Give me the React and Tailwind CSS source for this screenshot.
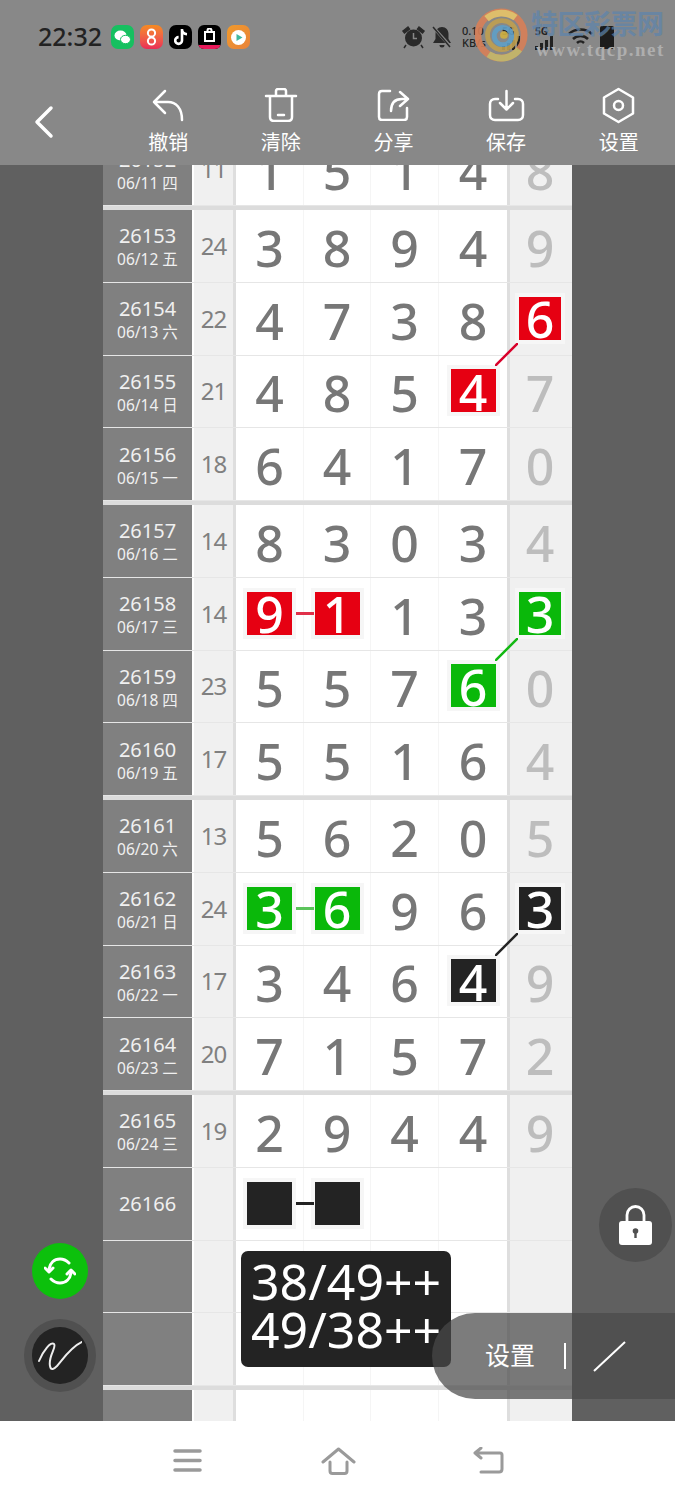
import React from "react";

const groups = [
  [
    { id: "26152", date: "06/11 四", sum: "11", nums: ["1", "5", "1", "4", "8"] },
  ],
  [
    { id: "26153", date: "06/12 五", sum: "24", nums: ["3", "8", "9", "4", "9"] },
    { id: "26154", date: "06/13 六", sum: "22", nums: ["4", "7", "3", "8", "6"], marks: { 4: "r" }, link: "r" },
    { id: "26155", date: "06/14 日", sum: "21", nums: ["4", "8", "5", "4", "7"], marks: { 3: "r" } },
    { id: "26156", date: "06/15 一", sum: "18", nums: ["6", "4", "1", "7", "0"] },
  ],
  [
    { id: "26157", date: "06/16 二", sum: "14", nums: ["8", "3", "0", "3", "4"] },
    { id: "26158", date: "06/17 三", sum: "14", nums: ["9", "1", "1", "3", "3"], marks: { 0: "r", 1: "r", 4: "g" }, dash: "r", link: "g" },
    { id: "26159", date: "06/18 四", sum: "23", nums: ["5", "5", "7", "6", "0"], marks: { 3: "g" } },
    { id: "26160", date: "06/19 五", sum: "17", nums: ["5", "5", "1", "6", "4"] },
  ],
  [
    { id: "26161", date: "06/20 六", sum: "13", nums: ["5", "6", "2", "0", "5"] },
    { id: "26162", date: "06/21 日", sum: "24", nums: ["3", "6", "9", "6", "3"], marks: { 0: "g", 1: "g", 4: "k" }, dash: "g", link: "k" },
    { id: "26163", date: "06/22 一", sum: "17", nums: ["3", "4", "6", "4", "9"], marks: { 3: "k" } },
    { id: "26164", date: "06/23 二", sum: "20", nums: ["7", "1", "5", "7", "2"] },
  ],
  [
    { id: "26165", date: "06/24 三", sum: "19", nums: ["2", "9", "4", "4", "9"] },
    { id: "26166", nums: ["", "", "", "", ""], marks: { 0: "k", 1: "k" }, dash: "k" },
    { nums: ["", "", "", "", ""] },
    { nums: ["", "", "", "", ""] },
  ],
  [{ nums: ["", "", "", "", ""] }],
];

const markBg = { r: "bg-[#e60012]", g: "bg-[#0ab80a]", k: "bg-[#232323]" };
const dashBg = { r: "bg-[#e0304a]", g: "bg-[#5cc45c]", k: "bg-[#232323]" };
const linkColor = { r: "#d8002a", g: "#12b812", k: "#232323" };

function Row({ row }) {
  return (
    <div className="relative grid h-[72.75px] grid-cols-[89px_44px_68px_67px_68px_68px_65px] border-b border-[#e6e6e6]">
      <div className="flex flex-col items-center justify-center bg-[#808080] pt-[1px] text-[#f0f0f0]">
        {row.id && <div className="text-[20px] leading-[26px]">{row.id}</div>}
        {row.date && <div className="text-[15.5px] leading-[20px]">{row.date}</div>}
      </div>
      <div className="flex items-center justify-center border-l-2 border-r-3 border-l-white border-r-[#dedede] bg-[#f0f0f0] text-[24px] tracking-[-1px] text-[#808080]">
        {row.sum}
      </div>
      {row.nums.map((n, i) => (
        <Cell key={i} n={n} i={i} mark={row.marks && row.marks[i]} />
      ))}
      {row.dash && (
        <span className={"absolute left-[193px] top-[34px] h-[3px] w-[18px] " + dashBg[row.dash]}></span>
      )}
      {row.link && (
        <svg className="absolute left-[392px] top-[60px] z-10" width="23" height="23" viewBox="0 0 23 23">
          <line x1="23" y1="0" x2="0" y2="23" stroke={linkColor[row.link]} strokeWidth="2.500" />
        </svg>
      )}
    </div>
  );
}

function Cell({ n, i, mark }) {
  const last = i === 4;
  const cls = last
    ? "border-l-3 border-[#dedede] bg-[#f0f0f0] pr-[2px] text-[#bdbdbd]"
    : i === 3
      ? "bg-white text-[#777777]"
      : "border-r border-[#f5f5f5] bg-white text-[#777777]";
  return (
    <div className={"flex items-center justify-center text-[50px] font-medium leading-none " + cls}>
      {mark ? (
        <span
          className={
            "mb-[1px] flex h-[43px] items-center justify-center pt-[2px] text-white shadow-[0_0_0_4px_#f6f6f6] " +
            (last ? "w-[42px] " : "w-[45px] ") +
            markBg[mark]
          }
        >
          {n}
        </span>
      ) : (
        <span className="pt-[4px]">{n}</span>
      )}
    </div>
  );
}

function ToolButton({ label, children }) {
  return (
    <div className="flex w-[112.75px] flex-col items-center">
      <div className="flex h-[40px] w-full items-center justify-center">{children}</div>
      <div className="mt-[3px] text-[20px] leading-[30px] text-white">{label}</div>
    </div>
  );
}

function StatusIcons() {
  return (
    <div className="ml-[9px] flex items-center gap-[6px]">
      <div className="flex h-[24px] w-[23px] items-center justify-center rounded-[7px] bg-[#16c060]">
        <svg width="17" height="15" viewBox="0 0 17 15" fill="#fff">
          <ellipse cx="6.5" cy="5.5" rx="6" ry="5" />
          <ellipse cx="11.5" cy="9.5" rx="5" ry="4.2" stroke="#16c060" />
        </svg>
      </div>
      <div className="flex h-[24px] w-[23px] items-center justify-center rounded-[7px] bg-gradient-to-b from-[#f58a1f] to-[#ea2a55]">
        <svg width="17" height="19" viewBox="0 0 17 19" fill="none" stroke="#fff" strokeWidth="2">
          <circle cx="8.5" cy="5" r="3.6" />
          <circle cx="8.5" cy="13" r="3.6" />
        </svg>
      </div>
      <div className="flex h-[24px] w-[23px] items-center justify-center rounded-[7px] bg-black">
        <svg width="14" height="17" viewBox="0 0 14 17" fill="none" stroke="#fff" strokeWidth="2.6">
          <path d="M8 0v11.5a3.4 3.4 0 1 1-3.4-3.4M8 1c.4 2.6 2.2 4 5 4.2" />
        </svg>
      </div>
      <div className="flex h-[24px] w-[23px] flex-col items-center justify-between overflow-hidden rounded-[6px] bg-black pt-[3px]">
        <svg width="13" height="14" viewBox="0 0 13 14" fill="none" stroke="#fff" strokeWidth="2">
          <path d="M2 4h9v9H2zM4.500 4V2.500a2 2 0 0 1 4 0V4" />
        </svg>
        <div className="h-[4px] w-full bg-[#e8195a]"></div>
      </div>
      <div className="flex h-[24px] w-[23px] items-center justify-center rounded-[7px] bg-gradient-to-br from-[#f09a2a] to-[#e8823a]">
        <svg width="17" height="17" viewBox="0 0 17 17">
          <circle cx="8.5" cy="8.5" r="7.500" fill="#fff" />
          <path d="M6.500 5l6 3.500-6 3.500z" fill="#40b8a0" />
        </svg>
      </div>
    </div>
  );
}

function SignalBars() {
  return (
    <div className="flex h-[26px] w-[30px] flex-col justify-end">
      <div className="text-[10px] font-bold leading-[10px] text-[#222]">5G</div>
      <div className="flex h-[14px] items-end gap-[2px]">
        <span className="h-[4px] w-[3px] bg-[#222]"></span>
        <span className="h-[7px] w-[3px] bg-[#222]"></span>
        <span className="h-[10px] w-[3px] bg-[#222]"></span>
        <span className="h-[14px] w-[3px] bg-[#222]"></span>
      </div>
    </div>
  );
}

function RightStatus() {
  return (
    <div className="absolute left-[402px] top-[24px] flex h-[26px] items-center">
      <svg width="23" height="24" viewBox="0 0 23 24" fill="#2a2a2a">
        <circle cx="11.500" cy="13" r="8.500" />
        <path d="M1 6l5-4 1.500 2-5 4zM22 6l-5-4-1.500 2 5 4zM4 20l-2 3M19 20l2 3" stroke="#2a2a2a" strokeWidth="1.500" />
        <path d="M11.500 8v5.500h3.500" stroke="#888" strokeWidth="1.500" fill="none" />
      </svg>
      <svg className="ml-[6px]" width="22" height="24" viewBox="0 0 22 24" fill="#2a2a2a">
        <path d="M11 2c4 0 6.500 3 6.500 7v5l2.500 4H2l2.500-4V9C4.500 5 7 2 11 2zM8.500 20h5a2.500 2.500 0 0 1-5 0z" />
        <path d="M3 3l16 18" stroke="#888" strokeWidth="3" />
        <path d="M2 2l17 20" stroke="#2a2a2a" strokeWidth="1.500" />
      </svg>
      <div className="ml-[9px] w-[32px] text-[11px] font-medium leading-[12px] text-[#222]">
        <div>0.10</div>
        <div>KB/s</div>
      </div>
      <div className="ml-[8px]">
        <SignalBars />
      </div>
      <div className="ml-[3px]">
        <SignalBars />
      </div>
      <svg className="ml-[3px]" width="25" height="22" viewBox="0 0 25 22" fill="none" stroke="#222" strokeWidth="2.500">
        <path d="M1 8c6-6 17-6 23 0M5 13c4-4 11-4 15 0M9 17c2-2 5-2 7 0" />
      </svg>
      <div className="ml-[7px] h-[23px] w-[14px] rounded-[2px] bg-[#1c1c1c]"></div>
    </div>
  );
}

function Watermark() {
  return (
    <div className="absolute left-[475px] top-[8px] flex h-[56px] w-[200px]">
      <svg width="54" height="54" viewBox="0 0 56 54" fill="none" className="opacity-90">
        <circle cx="27" cy="27" r="24" stroke="#d88058" strokeWidth="7" />
        <path d="M12 10A24 24 0 0 1 42 9" stroke="#e8c468" strokeWidth="7" />
        <path d="M46 42A24 24 0 0 1 14 47" stroke="#c8b868" strokeWidth="7" />
        <circle cx="28" cy="27" r="15" stroke="#c0a050" strokeWidth="5" />
        <circle cx="29" cy="28" r="9" stroke="#5fa0c8" strokeWidth="5" />
        <circle cx="30" cy="27" r="4" fill="#d0b040" />
      </svg>
      <div className="ml-[2px] flex flex-col items-start">
        <div className="text-[27px] font-bold leading-[32px] tracking-[-0.5px] text-[#5d84ad] opacity-70">特区彩票网</div>
        <div className="ml-[5px] mt-[1px] font-['Liberation_Serif',serif] text-[19px] font-bold leading-[18px] tracking-[1.5px] text-[#aeaeae]">
          www.tqcp.net
        </div>
      </div>
    </div>
  );
}

export default function App() {
  return (
    <div className="relative flex h-[1500px] w-[675px] flex-col overflow-hidden bg-white font-['Noto_Sans','Noto_Sans_CJK_SC',sans-serif]">
      {/* top bars */}
      <div className="h-[165px] shrink-0 bg-[#888888]">
        <div className="flex h-[75px] items-center pb-[1px] pl-[38px]">
          <div className="text-[25px] font-medium text-[#222]">22:32</div>
          <StatusIcons />
        </div>
        <div className="flex pt-[10px]">
          <div className="flex w-[112px] items-center pl-[33px]">
            <svg width="22" height="34" viewBox="0 0 22 34" fill="none" stroke="#fff" strokeWidth="3.500" strokeLinecap="round" strokeLinejoin="round">
              <path d="M18 3L4 17l14 14" />
            </svg>
          </div>
          <ToolButton label="撤销">
            <svg width="32" height="34" viewBox="0 0 32 34" fill="none" stroke="#fff" strokeWidth="2.500" strokeLinecap="round" strokeLinejoin="round">
              <path d="M13 3L2 14l11 11M2 14h14c8 0 14 6 14 18" />
            </svg>
          </ToolButton>
          <ToolButton label="清除">
            <svg width="34" height="34" viewBox="0 0 34 34" fill="none" stroke="#fff" strokeWidth="2.500" strokeLinecap="round" strokeLinejoin="round">
              <path d="M2 8h30M12 7V3c0-1 1-2 2-2h6c1 0 2 1 2 2v4M6 9v20c0 2 1 4 4 4h14c3 0 4-2 4-4V9M14 27h6" />
            </svg>
          </ToolButton>
          <ToolButton label="分享">
            <svg width="33" height="32" viewBox="0 0 33 32" fill="none" stroke="#fff" strokeWidth="2.500" strokeLinecap="round" strokeLinejoin="round">
              <path d="M13 2H5C3 2 2 3 2 5v23c0 2 1 3 3 3h22c2 0 3-1 3-3v-9M23 3l8 7-8 7M31 10h-6c-7 0-11 4-11 12" />
            </svg>
          </ToolButton>
          <ToolButton label="保存">
            <svg width="37" height="33" viewBox="0 0 37 33" fill="none" stroke="#fff" strokeWidth="2.500" strokeLinecap="round" strokeLinejoin="round">
              <path d="M10 10H7c-3 0-5 2-5 5v11c0 3 2 5 5 5h23c3 0 5-2 5-5V15c0-3-2-5-5-5h-3M18.500 2v18M12 14l6.500 6.500L25 14" />
            </svg>
          </ToolButton>
          <ToolButton label="设置">
            <svg width="33" height="37" viewBox="0 0 33 37" fill="none" stroke="#fff" strokeWidth="2.500" strokeLinejoin="round">
              <path d="M16.500 2L31 10.500v16L16.500 35 2 26.500v-16z" />
              <circle cx="16.500" cy="18.500" r="4.500" />
            </svg>
          </ToolButton>
        </div>
      </div>

      {/* chart */}
      <div className="flex min-h-0 flex-1 overflow-hidden bg-[#606060]">
        <div className="w-[103px] shrink-0"></div>
        <div className="-mt-[31.75px] w-[469px] shrink-0">
          {groups.map((g, gi) => (
            <div key={gi} className="border-b-4 border-[#dcdcdc]">
              {g.map((row, ri) => (
                <Row key={ri} row={row} />
              ))}
            </div>
          ))}
        </div>
      </div>

      {/* bottom nav */}
      <div className="flex h-[79px] shrink-0 items-center bg-white pl-[173px]">
        <svg width="29" height="23" viewBox="0 0 29 23" fill="none" stroke="#9a9a9a" strokeWidth="3.500" strokeLinecap="round">
          <path d="M2 2h25M2 11.500h25M2 21h25" />
        </svg>
        <svg className="ml-[119px]" width="35" height="28" viewBox="0 0 35 28" fill="none" stroke="#9a9a9a" strokeWidth="3" strokeLinecap="round" strokeLinejoin="round">
          <path d="M2 15L17.500 2 33 15M9 15v9c0 1.500 1 2.500 2.500 2.500h12c1.500 0 2.500-1 2.500-2.500v-9" />
        </svg>
        <svg className="ml-[117px]" width="31" height="27" viewBox="0 0 31 27" fill="none" stroke="#9a9a9a" strokeWidth="3" strokeLinecap="round" strokeLinejoin="round">
          <path d="M2 6h25c1.500 0 2 1 2 2v14c0 2-1 3-3 3H8M8 1L2 6l6 5" />
        </svg>
      </div>

      {/* overlays */}
      <RightStatus />
      <Watermark />

      <div className="absolute left-[241px] top-[1251px] z-10 h-[116px] w-[210px] rounded-[7px] bg-[#232323] pl-[10px] pt-[6px] text-[50px] leading-[48px] text-white">
        <div>38/49++</div>
        <div>49/38++</div>
      </div>

      <div className="absolute left-[432px] top-[1313px] z-10 flex h-[86px] w-[243px] items-center rounded-l-[43px] bg-[#4a4a4a]/72 pl-[53px] text-[25px] text-white">
        <span>设置</span>
        <span className="ml-[29px] h-[26px] w-[2px] bg-white"></span>
        <svg className="ml-[27px]" width="33" height="31" viewBox="0 0 33 31" fill="none" stroke="#fff" strokeWidth="2">
          <path d="M1 30L32 1" />
        </svg>
      </div>

      <div className="absolute left-[599px] top-[1188px] z-10 flex h-[74px] w-[73px] items-center justify-center rounded-full bg-[#505050]">
        <svg width="33" height="40" viewBox="0 0 33 40" fill="none">
          <path d="M8 18V10a8.500 8.500 0 0 1 17 0v8" stroke="#fff" strokeWidth="2.800" />
          <rect x="0" y="16" width="33" height="24" rx="3" fill="#fff" />
          <circle cx="16.500" cy="26" r="2.800" fill="#505050" />
          <rect x="15.300" y="26" width="2.400" height="7" fill="#505050" />
        </svg>
      </div>

      <div className="absolute left-[32px] top-[1243px] z-10 flex h-[56px] w-[56px] items-center justify-center rounded-full bg-[#0cc00c]">
        <svg width="32" height="30" viewBox="0 0 32 30" fill="none" stroke="#fff" strokeWidth="3" strokeLinecap="round" strokeLinejoin="round">
          <path d="M5 13C6 7 10 3 16 3c4 0 7 2 9 4M27 17c-1 6-5 10-11 10-4 0-7-2-9-4" />
          <path d="M1 12l4 4 4-4M23 18l4-4 4 4" />
        </svg>
      </div>

      <div className="absolute left-[24px] top-[1319px] z-10 flex h-[73px] w-[72px] items-center justify-center rounded-full bg-[#505050]">
        <div className="flex h-[57px] w-[56px] items-center justify-center rounded-full bg-[#232323]">
          <svg width="44" height="42" viewBox="0 0 44 42" fill="none" stroke="#eee" strokeWidth="2" strokeLinecap="round">
            <path d="M1 26C5 16 13 6 16 9c3 3-6 12-4 22 1 5 4 3 7 0C25 24 33 12 44 7" />
          </svg>
        </div>
      </div>
    </div>
  );
}
